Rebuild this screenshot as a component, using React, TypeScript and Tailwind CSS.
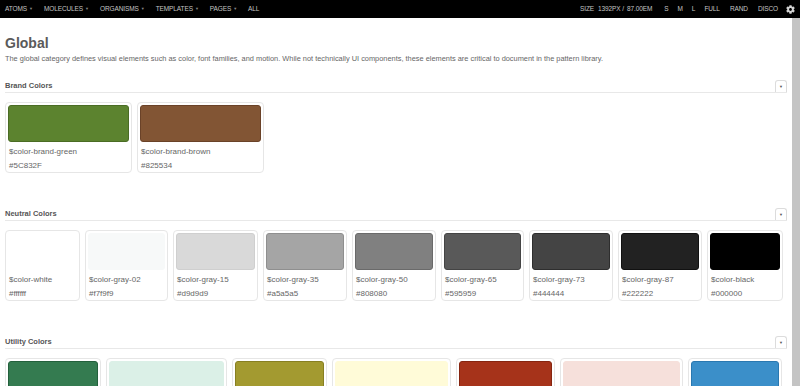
import React from "react";
import { FaCog } from "react-icons/fa";

interface Swatch {
  name: string;
  hex: string;
  width: number;
  border: string;
}

interface Section {
  title: string;
  swatches: Swatch[];
}

const sections: Section[] = [
  {
    title: "Brand Colors",
    swatches: [
      { name: "$color-brand-green", hex: "#5C832F", width: 127, border: "#4a6c24" },
      { name: "$color-brand-brown", hex: "#825534", width: 127, border: "#6a4228" },
    ],
  },
  {
    title: "Neutral Colors",
    swatches: [
      { name: "$color-white", hex: "#ffffff", width: 75, border: "#ffffff" },
      { name: "$color-gray-02", hex: "#f7f9f9", width: 83, border: "#f7f9f9" },
      { name: "$color-gray-15", hex: "#d9d9d9", width: 85, border: "#cfcfcf" },
      { name: "$color-gray-35", hex: "#a5a5a5", width: 84, border: "#8f8f8f" },
      { name: "$color-gray-50", hex: "#808080", width: 84, border: "#6a6a6a" },
      { name: "$color-gray-65", hex: "#595959", width: 83, border: "#444444" },
      { name: "$color-gray-73", hex: "#444444", width: 84, border: "#2e2e2e" },
      { name: "$color-gray-87", hex: "#222222", width: 84, border: "#111111" },
      { name: "$color-black", hex: "#000000", width: 76, border: "#000000" },
    ],
  },
  {
    title: "Utility Colors",
    swatches: [
      { name: "$color-utility-success", hex: "#347b50", width: 96, border: "#23603c" },
      { name: "$color-utility-success-light", hex: "#dbf0e7", width: 121, border: "#dbf0e7" },
      { name: "$color-utility-warning", hex: "#a39a30", width: 95, border: "#877f22" },
      { name: "$color-utility-warning-light", hex: "#fffbd8", width: 119, border: "#fffbd8" },
      { name: "$color-utility-error", hex: "#a6331a", width: 99, border: "#862510" },
      { name: "$color-utility-error-light", hex: "#f6e0db", width: 123, border: "#f6e0db" },
      { name: "$color-utility-info", hex: "#3b8fc9", width: 94, border: "#2a78b0" },
    ],
  },
];

const leftNav = ["ATOMS", "MOLECULES", "ORGANISMS", "TEMPLATES", "PAGES"];

const Header: React.FC = () => (
  <div className="h-[18px] bg-black flex items-center text-[6.5px] text-[#c4c4c4] tracking-[-0.1px]">
    <div className="flex items-center pl-[5px]">
      {leftNav.map((item) => (
        <span key={item} className="flex items-center mr-[11px]">
          {item}
          <span className="ml-[2px] text-[4px] text-[#888]">▼</span>
        </span>
      ))}
      <span>ALL</span>
    </div>
    <div className="ml-auto flex items-center pr-[5px]">
      <span className="mr-[4px]">SIZE</span>
      <span className="mr-[3px]">1392PX /</span>
      <span className="mr-[12px]">87.00EM</span>
      <span className="mr-[9px]">S</span>
      <span className="mr-[9px]">M</span>
      <span className="mr-[9px]">L</span>
      <span className="mr-[10px]">FULL</span>
      <span className="mr-[10px]">RAND</span>
      <span className="mr-[8px]">DISCO</span>
      <FaCog size={9} className="text-[#d4d4d4]" />
    </div>
  </div>
);

const SwatchCard: React.FC<{ swatch: Swatch }> = ({ swatch }) => (
  <div
    className="shrink-0 border border-[#e6e6e6] rounded-[4px] px-[2px] pt-[2px]"
    style={{ width: swatch.width }}
  >
    <div
      className="h-[37px] rounded-[3px] border"
      style={{ backgroundColor: swatch.hex, borderColor: swatch.border }}
    />
    <div className="px-[1px] text-[8px] text-[#666] leading-[14px] mt-[3px]">
      <p className="whitespace-nowrap">{swatch.name}</p>
      <p className="leading-[13px]">{swatch.hex}</p>
    </div>
  </div>
);

const ColorSection: React.FC<{ section: Section }> = ({ section }) => (
  <div className="mb-[36px]">
    <div className="flex items-end h-[12px] border-b border-[#e8e8e8]">
      <h2 className="text-[7.5px] font-bold text-[#555] leading-[10px] pb-[1px]">
        {section.title}
      </h2>
      <button className="ml-auto w-[12px] h-[12px] border border-b-0 border-[#dcdcdc] rounded-t-[3px] bg-white flex items-center justify-center">
        <span className="text-[4px] text-[#555] leading-none">▼</span>
      </button>
    </div>
    <div className="flex gap-[5px] mt-[9px]">
      {section.swatches.map((s) => (
        <SwatchCard key={s.name} swatch={s} />
      ))}
    </div>
  </div>
);

const App: React.FC = () => {
  return (
    <div className="w-[800px] h-[386px] overflow-hidden bg-white font-['Liberation_Sans',Arial,sans-serif]">
      <Header />
      <div className="flex h-[368px]">
        <div className="flex-1 px-[5px] pt-[17px] overflow-hidden">
          <h1 className="text-[14px] font-bold text-[#5a5a5a] leading-[17px]">Global</h1>
          <p className="text-[7.4px] text-[#666] leading-[10px] mt-[2px] mb-[17px] whitespace-nowrap">
            The global category defines visual elements such as color, font families, and motion.
            While not technically UI components, these elements are critical to document in the
            pattern library.
          </p>
          {sections.map((section) => (
            <ColorSection key={section.title} section={section} />
          ))}
        </div>
        <div className="w-[8px] bg-[#c4c4c4]" />
      </div>
    </div>
  );
};

export default App;
